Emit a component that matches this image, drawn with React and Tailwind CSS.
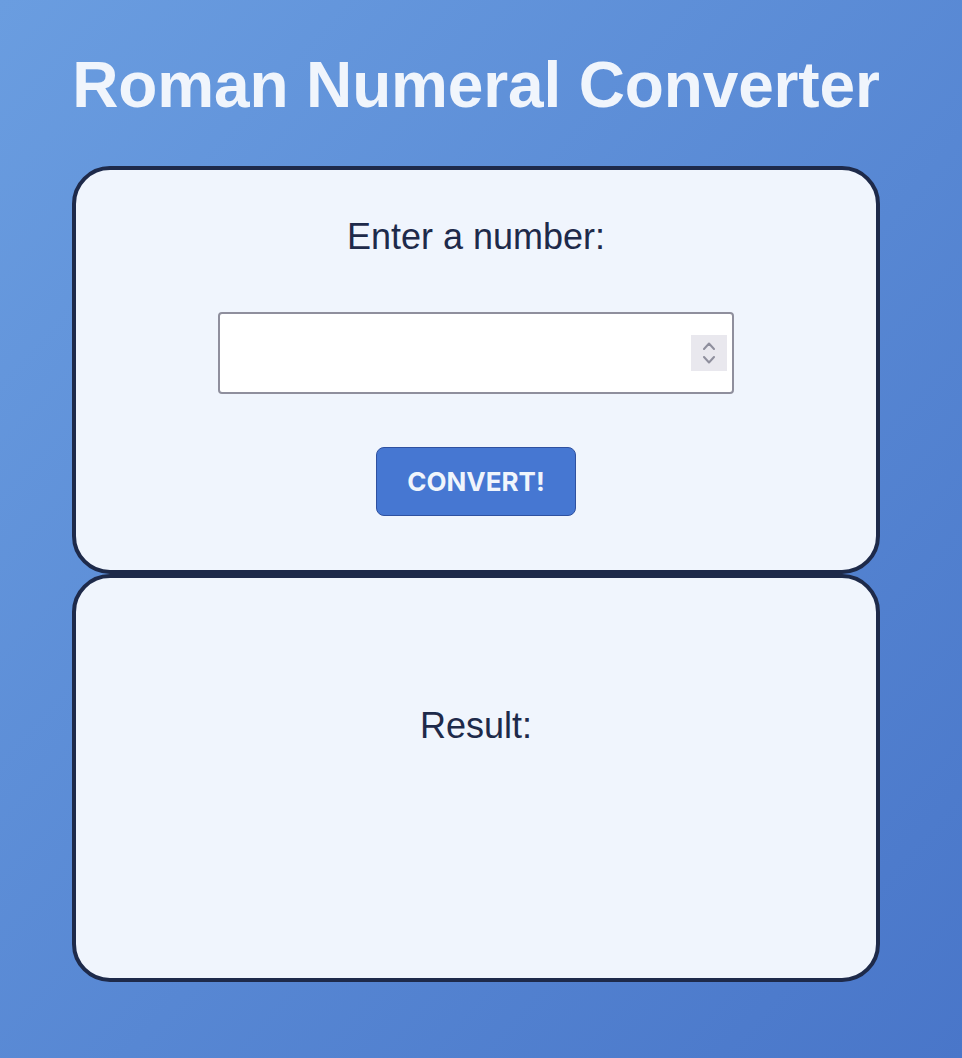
import { useState } from "react";

function Spinner() {
  return (
    <div className="flex h-9 w-9 flex-col items-center justify-center gap-[6px] bg-[#e9e8ee]">
      <svg width="12" height="8" viewBox="0 0 12 8" fill="none">
        <path d="M1 7L6 1.5L11 7" stroke="#8f8f9d" strokeWidth="2" strokeLinecap="round" strokeLinejoin="round" />
      </svg>
      <svg width="12" height="8" viewBox="0 0 12 8" fill="none">
        <path d="M1 1L6 6.5L11 1" stroke="#8f8f9d" strokeWidth="2" strokeLinecap="round" strokeLinejoin="round" />
      </svg>
    </div>
  );
}

export default function App() {
  const [value, setValue] = useState("");
  const [result, setResult] = useState("");

  function toRoman(num) {
    const map = [
      [1000, "M"], [900, "CM"], [500, "D"], [400, "CD"], [100, "C"], [90, "XC"],
      [50, "L"], [40, "XL"], [10, "X"], [9, "IX"], [5, "V"], [4, "IV"], [1, "I"],
    ];
    let out = "";
    for (const [n, r] of map) {
      while (num >= n) {
        out += r;
        num -= n;
      }
    }
    return out;
  }

  function handleConvert() {
    const n = parseInt(value, 10);
    if (!n || n < 1 || n > 3999) {
      setResult("");
      return;
    }
    setResult(toRoman(n));
  }

  return (
    <main
      className="min-h-[1058px] w-full bg-linear-to-br from-[#6a9de0] to-[#4976c9] pt-[53px] pb-[76px]"
      style={{ fontFamily: '"Liberation Sans", Arial, sans-serif' }}
    >
      <div className="ml-[72px] w-[808px]">
        <h1 className="whitespace-nowrap text-center text-[64px] font-bold leading-none tracking-[-0.15px] text-[#f0f5fc]">
          Roman Numeral Converter
        </h1>

        <section className="mt-[49px] flex flex-col items-center rounded-[38px] border-4 border-[#1e2a4a] bg-[#f0f5fd] pt-[49px] pb-[54px]">
          <label className="text-[36px] leading-none text-[#1e2a4a]">Enter a number:</label>
          <div className="mt-[57px] flex h-[82px] w-[516px] items-center rounded-[4px] border-2 border-[#8f8f9d] bg-white pr-[5px]">
            <input
              type="text"
              value={value}
              onChange={(e) => setValue(e.target.value)}
              className="h-full flex-1 bg-transparent px-3 text-[28px] text-[#1e2a4a] outline-none"
            />
            <Spinner />
          </div>
          <button
            onClick={handleConvert}
            className="mt-[53px] h-[69px] w-[200px] rounded-[8px] border-[1.5px] border-[#2f51a0] bg-[#4677d2] text-[26px] font-bold leading-none text-[#f0f5fc]"
            style={{ fontFamily: "Inter, sans-serif" }}
          >
            CONVERT!
          </button>
        </section>

        <section className="flex h-[408px] flex-col items-center rounded-[38px] border-4 border-[#1e2a4a] bg-[#f0f5fd] pt-[130px]">
          <p className="text-[36px] leading-none text-[#1e2a4a]">Result:</p>
          <p className="mt-6 text-[36px] font-bold leading-none text-[#1e2a4a]">{result}</p>
        </section>
      </div>
    </main>
  );
}
